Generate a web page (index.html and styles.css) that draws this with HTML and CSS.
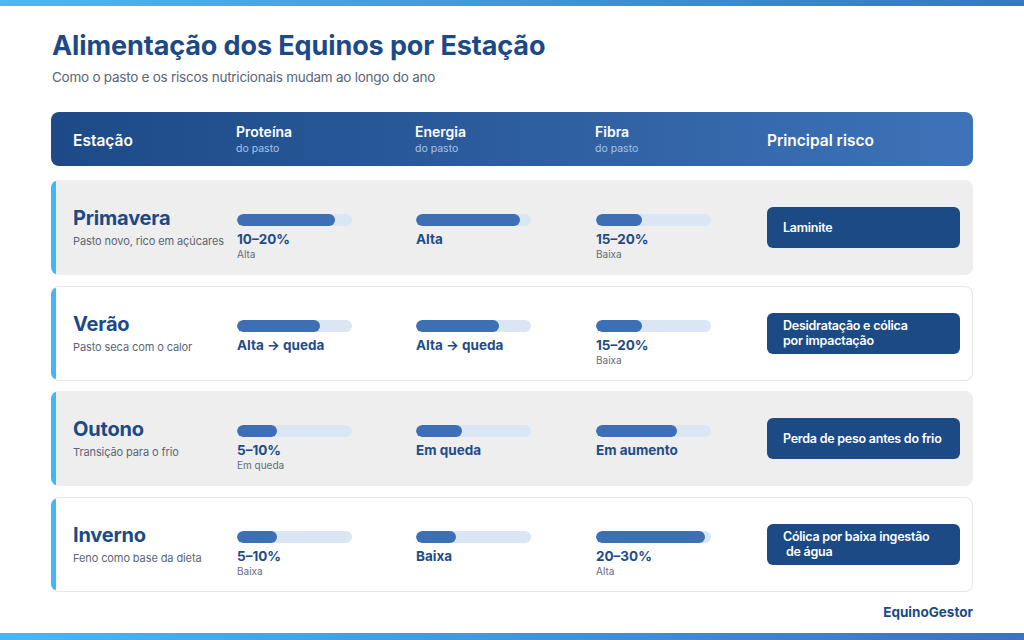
FILE: index.html
```html
<!DOCTYPE html>
<html lang="pt-BR">
<head>
<meta charset="utf-8">
<title>Alimentação dos Equinos por Estação</title>
<link rel="stylesheet" href="styles.css">
</head>
<body>
<div class="topbar"></div>
<main class="page">
  <h1 class="title">Alimentação dos Equinos por Estação</h1>
  <p class="subtitle">Como o pasto e os riscos nutricionais mudam ao longo do ano</p>

  <div class="thead">
    <div class="th th-main">Estação</div>
    <div class="th"><span class="th-name">Proteína</span><span class="th-sub">do pasto</span></div>
    <div class="th"><span class="th-name">Energia</span><span class="th-sub">do pasto</span></div>
    <div class="th"><span class="th-name">Fibra</span><span class="th-sub">do pasto</span></div>
    <div class="th th-main">Principal risco</div>
  </div>

  <div class="rows">
    <div class="row row-gray">
      <div class="season"><div class="season-name">Primavera</div><div class="season-desc">Pasto novo, rico em açúcares</div></div>
      <div class="metric"><div class="bar"><div class="fill" style="width:85%"></div></div><div class="value">10–20%</div><div class="note">Alta</div></div>
      <div class="metric"><div class="bar"><div class="fill" style="width:90%"></div></div><div class="value">Alta</div></div>
      <div class="metric"><div class="bar"><div class="fill" style="width:40%"></div></div><div class="value">15–20%</div><div class="note">Baixa</div></div>
      <div class="risk">Laminite</div>
    </div>
    <div class="row row-white">
      <div class="season"><div class="season-name">Verão</div><div class="season-desc">Pasto seca com o calor</div></div>
      <div class="metric"><div class="bar"><div class="fill" style="width:72%"></div></div><div class="value">Alta → queda</div></div>
      <div class="metric"><div class="bar"><div class="fill" style="width:72%"></div></div><div class="value">Alta → queda</div></div>
      <div class="metric"><div class="bar"><div class="fill" style="width:40%"></div></div><div class="value">15–20%</div><div class="note">Baixa</div></div>
      <div class="risk">Desidratação e cólica<br>por impactação</div>
    </div>
    <div class="row row-gray">
      <div class="season"><div class="season-name">Outono</div><div class="season-desc">Transição para o frio</div></div>
      <div class="metric"><div class="bar"><div class="fill" style="width:35%"></div></div><div class="value">5–10%</div><div class="note">Em queda</div></div>
      <div class="metric"><div class="bar"><div class="fill" style="width:40%"></div></div><div class="value">Em queda</div></div>
      <div class="metric"><div class="bar"><div class="fill" style="width:70%"></div></div><div class="value">Em aumento</div></div>
      <div class="risk">Perda de peso antes do frio</div>
    </div>
    <div class="row row-white">
      <div class="season"><div class="season-name">Inverno</div><div class="season-desc">Feno como base da dieta</div></div>
      <div class="metric"><div class="bar"><div class="fill" style="width:35%"></div></div><div class="value">5–10%</div><div class="note">Baixa</div></div>
      <div class="metric"><div class="bar"><div class="fill" style="width:35%"></div></div><div class="value">Baixa</div></div>
      <div class="metric"><div class="bar"><div class="fill" style="width:95%"></div></div><div class="value">20–30%</div><div class="note">Alta</div></div>
      <div class="risk">Cólica por baixa ingestão<br>&nbsp;de água</div>
    </div>
  </div>

  <div class="footer">EquinoGestor</div>
</main>
<div class="bottombar"></div>
</body>
</html>
```

FILE: styles.css
```css
* { box-sizing: border-box; }
html, body { margin: 0; padding: 0; }
body {
  width: 1024px;
  height: 640px;
  overflow: hidden;
  background: #ffffff;
  font-family: Inter, "Noto Sans", "Liberation Sans", sans-serif;
  color: #1b4a86;
  display: flex;
  flex-direction: column;
}
.topbar {
  height: 6px;
  background: linear-gradient(90deg, #4ab9f7 0%, #3f8fd6 60%, #3a76c2 100%);
}
.bottombar {
  height: 7px;
  margin-top: auto;
  background: linear-gradient(90deg, #46b8f7 0%, #3f8fd6 60%, #3a72be 100%);
}
.page {
  padding: 0 51px;
  display: flex;
  flex-direction: column;
}
.title {
  margin: 24px 0 0 1px;
  font-size: 27px;
  line-height: 32px;
  font-weight: 700;
  letter-spacing: -0.1px;
  color: #1b4a86;
}
.subtitle {
  margin: 6px 0 0 1px;
  font-size: 13.5px;
  line-height: 18px;
  color: #5b6575;
  letter-spacing: -0.25px;
}
.thead {
  margin-top: 26px;
  height: 54px;
  border-radius: 8px;
  background: linear-gradient(90deg, #1d4a87 0%, #2b5b9c 45%, #3e73b9 100%);
  display: grid;
  grid-template-columns: 163px 179px 180px 172px 1fr;
  padding-left: 22px;
  align-items: center;
  color: #ffffff;
}
.th { display: flex; flex-direction: column; }
.th-main { font-size: 15.5px; font-weight: 600; padding-top: 2px; }
.th-name { font-size: 14px; font-weight: 600; line-height: 18px; }
.th-sub { font-size: 10.5px; line-height: 14px; color: #a9c2e6; margin-top: 1px; }
.rows {
  margin-top: 14px;
  display: flex;
  flex-direction: column;
  gap: 10.5px;
}
.row {
  height: 95px;
  border-radius: 8px;
  display: grid;
  grid-template-columns: 163px 179px 180px 172px 1fr;
  padding: 0 13px 0 22px;
  align-items: center;
  position: relative;
  overflow: hidden;
}
.row::before {
  content: "";
  position: absolute;
  left: 0; top: 0; bottom: 0;
  width: 5px;
  border-radius: 3px;
  background: #44b6f6;
}
.row-gray { background: #eeeeee; }
.row-white { background: #ffffff; border: 1px solid #e7e7e7; border-left: none; padding-right: 12px; }
.season-name {
  font-size: 20px;
  line-height: 24px;
  font-weight: 700;
  color: #1b4a86;
  letter-spacing: -0.2px;
}
.season-desc {
  margin-top: 4px;
  font-size: 11px;
  line-height: 15px;
  color: #5b6575;
  letter-spacing: -0.1px;
}
.metric {
  align-self: start;
  padding-top: 34px;
  padding-left: 1px;
  padding-right: 63px;
}
.row-white .metric { padding-top: 33px; }
.bar {
  height: 12px;
  width: 115px;
  border-radius: 6px;
  background: #dae6f3;
  overflow: hidden;
}
.fill {
  height: 100%;
  border-radius: 6px;
  background: #3d6fb5;
}
.value {
  margin-top: 5px;
  font-size: 13.5px;
  line-height: 17px;
  font-weight: 700;
  color: #1f4c88;
  white-space: nowrap;
}
.note {
  font-size: 10px;
  line-height: 13px;
  color: #646d7a;
}
.risk {
  height: 41px;
  border-radius: 6px;
  background: #1b4a85;
  color: #ffffff;
  font-size: 12.5px;
  line-height: 15px;
  font-weight: 600;
  letter-spacing: -0.25px;
  padding: 0 10px 0 16px;
  display: flex;
  align-items: center;
  white-space: nowrap;
  overflow: hidden;
}
.footer {
  margin-top: 11px;
  text-align: right;
  font-size: 13.5px;
  line-height: 18px;
  font-weight: 700;
  color: #1b4a86;
}
```
